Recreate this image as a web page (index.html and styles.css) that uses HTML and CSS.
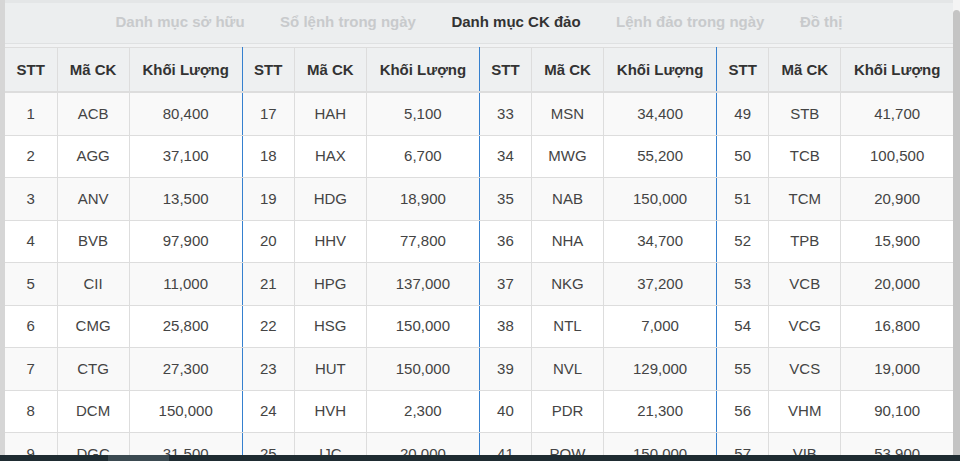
FILE: index.html
```html
<!DOCTYPE html>
<html lang="vi">
<head>
<meta charset="utf-8">
<link rel="stylesheet" href="styles.css">
</head>
<body>
<div class="screen">
  <div class="main">
    <div class="left-edge"></div>
    <div class="panel">
      <nav class="tabs">
        <span class="tab">Danh mục sở hữu</span>
        <span class="tab">Sổ lệnh trong ngày</span>
        <span class="tab active">Danh mục CK đảo</span>
        <span class="tab">Lệnh đảo trong ngày</span>
        <span class="tab">Đồ thị</span>
      </nav>
      <div class="table-wrap">
        <table class="grid">
          <colgroup>
            <col class="c-stt"><col class="c-ma"><col class="c-kl">
            <col class="c-stt"><col class="c-ma"><col class="c-kl">
            <col class="c-stt"><col class="c-ma"><col class="c-kl">
            <col class="c-stt"><col class="c-ma"><col class="c-kl-last">
          </colgroup>
          <thead>
            <tr>
              <th>STT</th><th>Mã CK</th><th class="sep">Khối Lượng</th>
              <th>STT</th><th>Mã CK</th><th class="sep">Khối Lượng</th>
              <th>STT</th><th>Mã CK</th><th class="sep">Khối Lượng</th>
              <th>STT</th><th>Mã CK</th><th>Khối Lượng</th>
            </tr>
          </thead>
          <tbody>
            <tr><td>1</td><td>ACB</td><td class="sep">80,400</td><td>17</td><td>HAH</td><td class="sep">5,100</td><td>33</td><td>MSN</td><td class="sep">34,400</td><td>49</td><td>STB</td><td>41,700</td></tr>
            <tr><td>2</td><td>AGG</td><td class="sep">37,100</td><td>18</td><td>HAX</td><td class="sep">6,700</td><td>34</td><td>MWG</td><td class="sep">55,200</td><td>50</td><td>TCB</td><td>100,500</td></tr>
            <tr><td>3</td><td>ANV</td><td class="sep">13,500</td><td>19</td><td>HDG</td><td class="sep">18,900</td><td>35</td><td>NAB</td><td class="sep">150,000</td><td>51</td><td>TCM</td><td>20,900</td></tr>
            <tr><td>4</td><td>BVB</td><td class="sep">97,900</td><td>20</td><td>HHV</td><td class="sep">77,800</td><td>36</td><td>NHA</td><td class="sep">34,700</td><td>52</td><td>TPB</td><td>15,900</td></tr>
            <tr><td>5</td><td>CII</td><td class="sep">11,000</td><td>21</td><td>HPG</td><td class="sep">137,000</td><td>37</td><td>NKG</td><td class="sep">37,200</td><td>53</td><td>VCB</td><td>20,000</td></tr>
            <tr><td>6</td><td>CMG</td><td class="sep">25,800</td><td>22</td><td>HSG</td><td class="sep">150,000</td><td>38</td><td>NTL</td><td class="sep">7,000</td><td>54</td><td>VCG</td><td>16,800</td></tr>
            <tr><td>7</td><td>CTG</td><td class="sep">27,300</td><td>23</td><td>HUT</td><td class="sep">150,000</td><td>39</td><td>NVL</td><td class="sep">129,000</td><td>55</td><td>VCS</td><td>19,000</td></tr>
            <tr><td>8</td><td>DCM</td><td class="sep">150,000</td><td>24</td><td>HVH</td><td class="sep">2,300</td><td>40</td><td>PDR</td><td class="sep">21,300</td><td>56</td><td>VHM</td><td>90,100</td></tr>
            <tr><td>9</td><td>DGC</td><td class="sep">31,500</td><td>25</td><td>IJC</td><td class="sep">20,000</td><td>41</td><td>POW</td><td class="sep">150,000</td><td>57</td><td>VIB</td><td>53,900</td></tr>
          </tbody>
        </table>
      </div>
    </div>
    <div class="right-edge"><div class="right-bar"></div></div>
  </div>
  <div class="bottom-bar"><div class="bottom-thumb"></div></div>
</div>
</body>
</html>
```
FILE: styles.css
```css
html, body {
  margin: 0;
  padding: 0;
}
body {
  width: 960px;
  height: 461px;
  overflow: hidden;
  background: #ffffff;
  font-family: "Liberation Sans", Arial, sans-serif;
  font-size: 15px;
  color: #444;
}
.screen {
  display: flex;
  flex-direction: column;
  height: 461px;
}
.main {
  display: flex;
  flex: 1;
  min-height: 0;
}
.left-edge {
  width: 5px;
  flex-shrink: 0;
  background: #d6d6d6;
}
.panel {
  flex: 1;
  min-width: 0;
  display: flex;
  flex-direction: column;
  overflow: hidden;
  background: #ffffff;
}
.tabs {
  flex-shrink: 0;
  display: flex;
  justify-content: center;
  align-items: center;
  gap: 35.5px;
  height: 36px;
  padding-bottom: 4px;
  border-top: 3px solid #e4e6e7;
  border-bottom: 1px solid #dfe1e2;
  background: #eceeef;
  font-weight: bold;
  font-size: 15px;
}
.tab {
  color: #c8cacc;
}
.tab.active {
  color: #333;
}
.table-wrap {
  flex-shrink: 0;
  padding-top: 3px;
  background: #f1f2f3;
}
.grid {
  width: 948px;
  table-layout: fixed;
  border-collapse: collapse;
  background: #fff;
}
.c-stt { width: 52px; }
.c-ma { width: 72px; }
.c-kl { width: 113px; }
.c-kl-last { width: 112px; }
.grid th,
.grid td {
  text-align: center;
  border: 1px solid #dddddd;
  white-space: nowrap;
  overflow: hidden;
}
.grid tr > :first-child { border-left: none; }
.grid tr > :last-child { border-right: none; }
.grid th {
  background: #eef0f1;
  color: #333;
  font-weight: bold;
  font-size: 15px;
  line-height: 20px;
  padding: 12px 2px 11px;
  border-bottom: 2px solid #dddddd;
}
.grid td {
  line-height: 20.5px;
  padding: 10.5px 2px 10.5px;
  color: #444;
}
.grid tbody tr:nth-child(odd) td {
  background: #f9f9f9;
}
.grid .sep {
  border-right: 1px solid #3580cf;
}
.right-edge {
  width: 7px;
  flex-shrink: 0;
  background: #f4f4f4;
  padding-top: 10px;
  display: flex;
}
.right-bar {
  flex: 1;
  background: #c4c4c4;
  border-top-left-radius: 4px;
  border-top-right-radius: 4px;
}
.bottom-bar {
  flex-shrink: 0;
  height: 6px;
  background: #1f2c32;
  display: flex;
  padding-left: 108px;
}
.bottom-thumb {
  width: 61px;
  background: #3b4a51;
}
```
